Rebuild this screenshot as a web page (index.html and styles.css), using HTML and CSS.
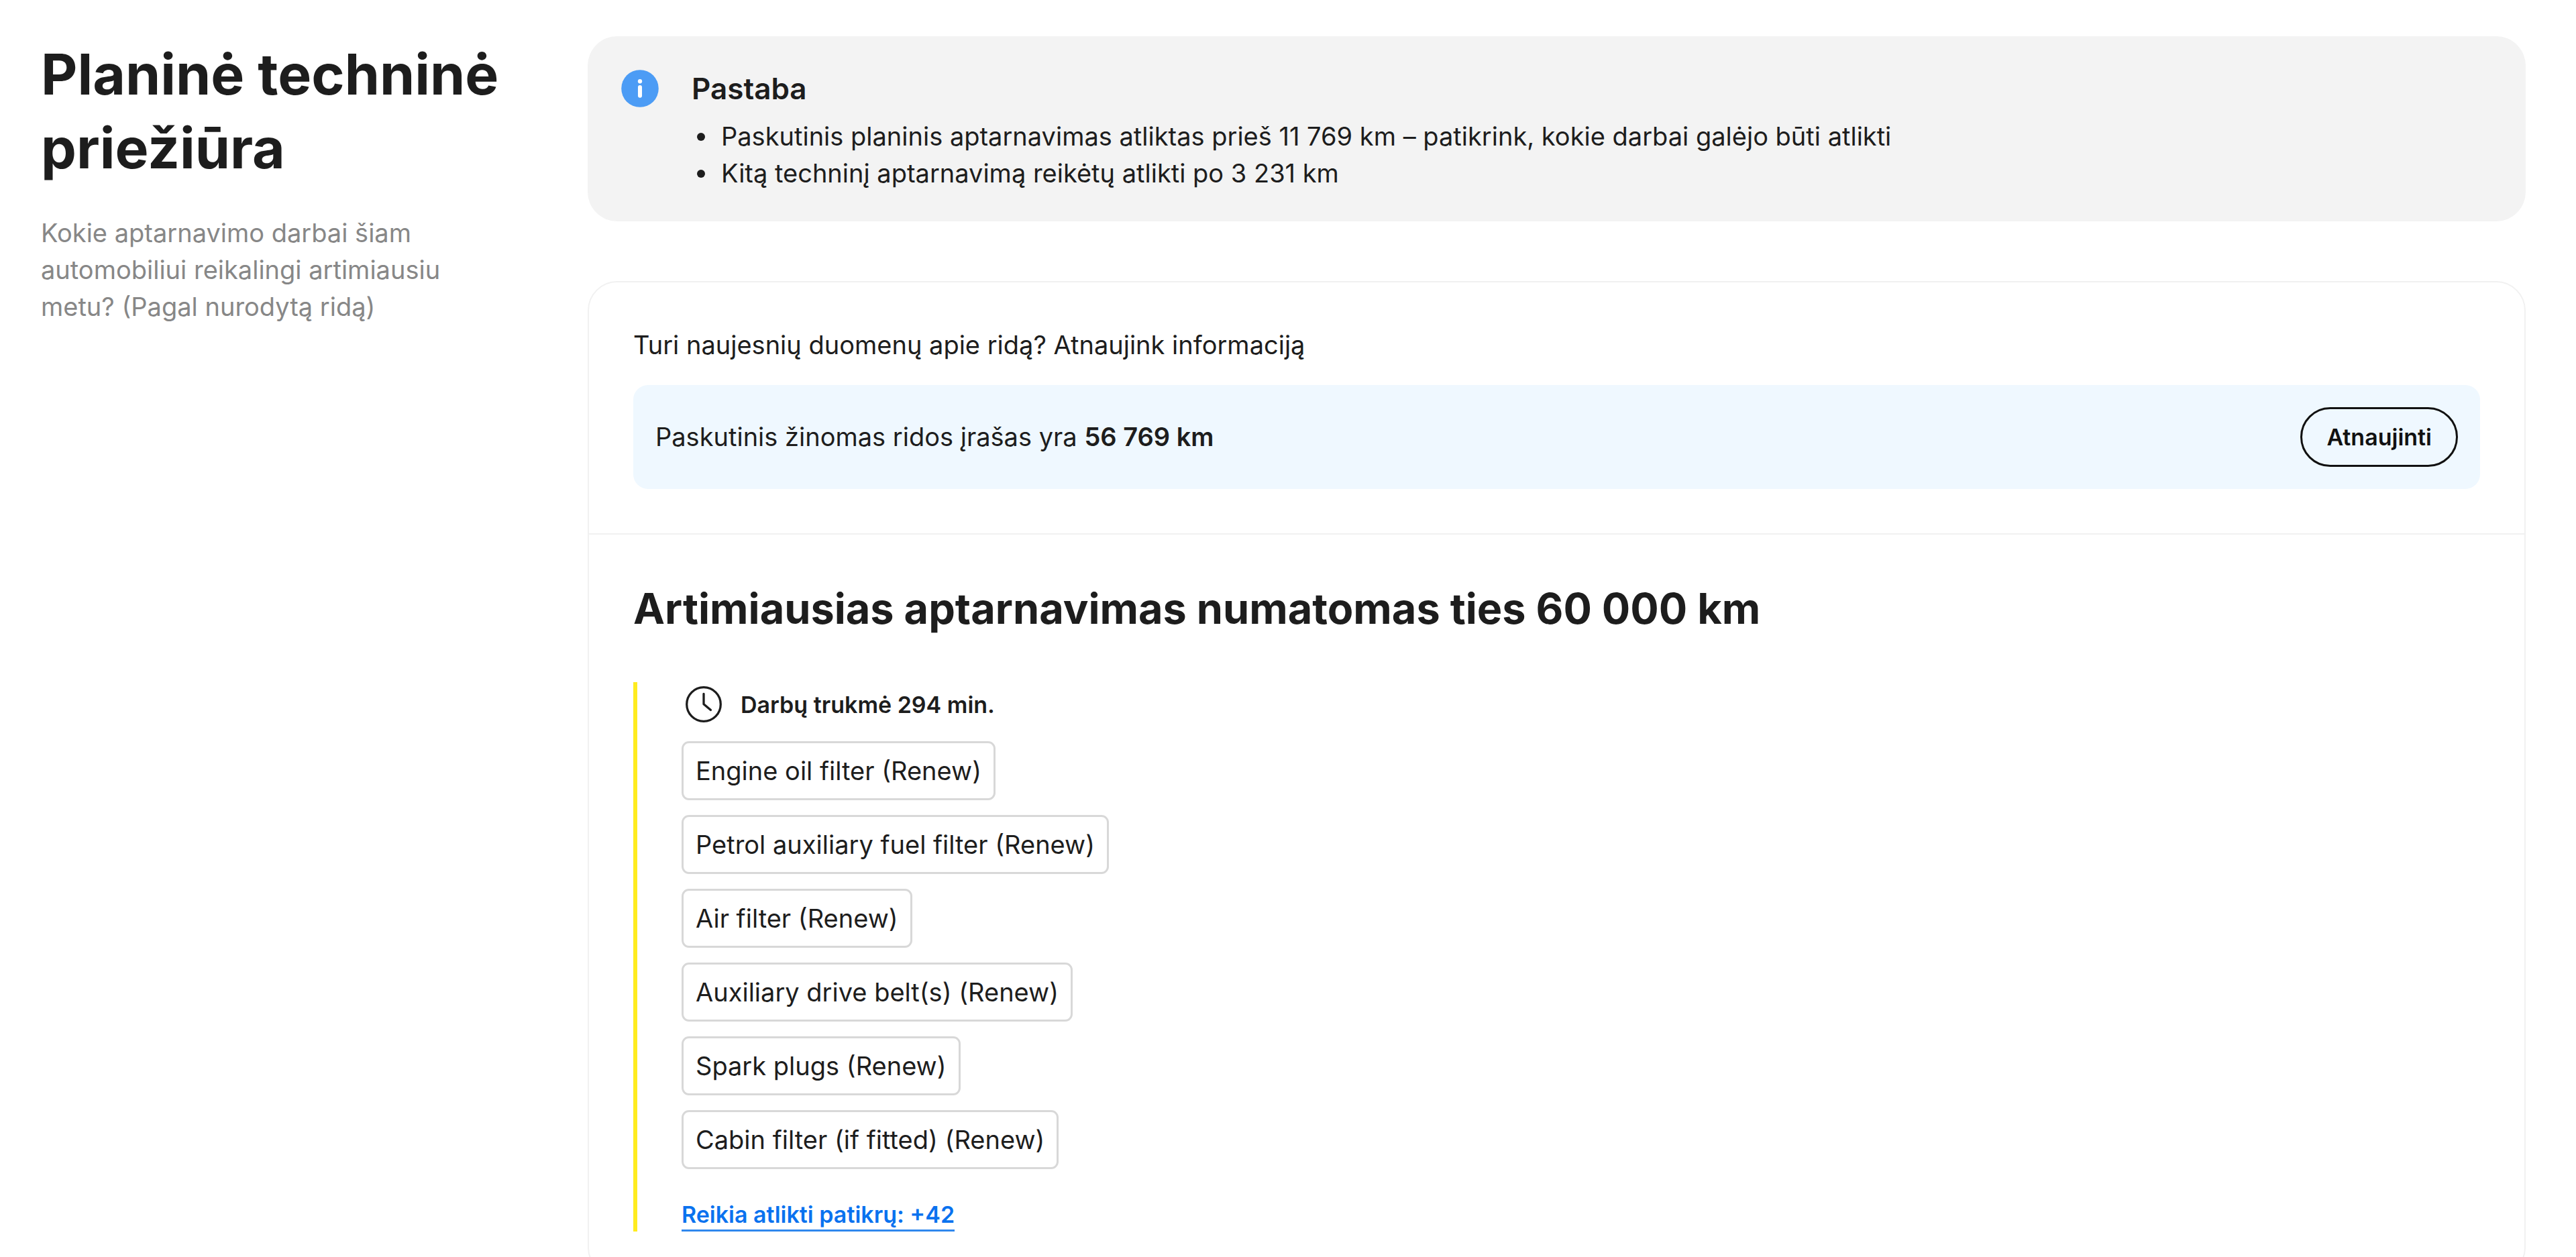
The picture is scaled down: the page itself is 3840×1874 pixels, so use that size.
FILE: index.html
```html
<!DOCTYPE html>
<html lang="lt">
<head>
    <meta charset="UTF-8">
    <meta name="viewport" content="width=device-width, initial-scale=1.0">
    <title>Planinė techninė priežiūra</title>
    <link rel="stylesheet" href="styles.css">
</head>
<body>

    <div class="container">
        <!-- Section title -->
        <header class="intro">
            <h1>Planinė techninė priežiūra</h1>
            <p>Kokie aptarnavimo darbai šiam automobiliui reikalingi artimiausiu metu? (Pagal nurodytą ridą)</p>
        </header>

        <main class="content">
            <!-- Note -->
            <section class="note">
                <svg class="icon" viewBox="0 0 24 24" aria-hidden="true">
                    <circle cx="12" cy="12" r="10.1" fill="#4c9cf5"/>
                    <circle cx="12" cy="8.1" r="1.15" fill="#fff"/>
                    <path d="M12 11.3v4.6" stroke="#fff" stroke-width="2.2" stroke-linecap="round"/>
                </svg>
                <div class="note-text">
                    <h2>Pastaba</h2>
                    <ul>
                        <li>Paskutinis planinis aptarnavimas atliktas prieš 11 769 km – patikrink, kokie darbai galėjo būti atlikti</li>
                        <li>Kitą techninį aptarnavimą reikėtų atlikti po 3 231 km</li>
                    </ul>
                </div>
            </section>

            <div class="card">
                <!-- Mileage update -->
                <section class="mileage">
                    <p>Turi naujesnių duomenų apie ridą? Atnaujink informaciją</p>
                    <div class="mileage-bar">
                        <span>Paskutinis žinomas ridos įrašas yra <strong>56 769 km</strong></span>
                        <button type="button">Atnaujinti</button>
                    </div>
                </section>

                <!-- Next service -->
                <section class="service">
                    <h2>Artimiausias aptarnavimas numatomas ties 60 000 km</h2>
                    <div class="works">
                        <div class="duration">
                            <svg class="icon" viewBox="0 0 24 24" fill="none" stroke="#1d1d1d" stroke-width="1.2" stroke-linecap="round" stroke-linejoin="round" aria-hidden="true">
                                <circle cx="12" cy="12" r="9.2"/>
                                <path d="M12 6.3v5.6l3.8 3.2"/>
                            </svg>
                            <span>Darbų trukmė 294 min.</span>
                        </div>
                        <ul class="work-list">
                            <li>Engine oil filter (Renew)</li>
                            <li>Petrol auxiliary fuel filter (Renew)</li>
                            <li>Air filter (Renew)</li>
                            <li>Auxiliary drive belt(s) (Renew)</li>
                            <li>Spark plugs (Renew)</li>
                            <li>Cabin filter (if fitted) (Renew)</li>
                        </ul>
                        <a href="#">Reikia atlikti patikrų: +42</a>
                    </div>
                </section>
            </div>
        </main>
    </div>

</body>
</html>
```
FILE: styles.css
```css
* {
    box-sizing: border-box;
    margin: 0;
    padding: 0;
}

body {
    font-family: Inter, "Liberation Sans", Arial, sans-serif;
    font-size: 38px;
    line-height: 55px;
    color: #1d1d1d;
    background-color: #ffffff;
}

.container {
    display: grid;
    grid-template-columns: 693px 1fr;
    column-gap: 122px;
    padding: 54px 75px 0 61px;
}

.intro {
    padding-top: 2px;
}

.intro h1 {
    font-size: 84px;
    line-height: 110px;
    font-weight: 700;
}

.intro p {
    margin-top: 44px;
    color: #878787;
}

.icon {
    width: 66px;
    height: 66px;
    flex-shrink: 0;
}

.note {
    display: flex;
    gap: 44px;
    padding: 45px 45px 44px;
    border-radius: 44px;
    background-color: #f3f3f3;
}

.note h2 {
    margin-bottom: 11px;
    font-size: 44px;
    line-height: 66px;
    font-weight: 600;
}

.note ul {
    padding-left: 8px;
    list-style: none;
}

.note li {
    display: flex;
    align-items: center;
    gap: 24px;
}

.note li::before {
    content: "";
    flex-shrink: 0;
    width: 12px;
    height: 12px;
    border-radius: 50%;
    background-color: #1d1d1d;
}

.card {
    margin-top: 89px;
    border: 2px solid #f1f1f1;
    border-radius: 44px;
}

.mileage {
    padding: 66px;
    border-bottom: 2px solid #f1f1f1;
}

.mileage-bar {
    display: flex;
    justify-content: space-between;
    align-items: center;
    margin-top: 32px;
    padding: 33px;
    border-radius: 22px;
    background-color: #eff8ff;
}

strong {
    font-weight: 600;
}

button {
    height: 89px;
    padding: 0 36px;
    border: 3px solid #111111;
    border-radius: 45px;
    background: none;
    color: #111111;
    font-family: inherit;
    font-size: 34px;
    font-weight: 600;
    cursor: pointer;
}

.service {
    padding: 66px;
}

.service h2 {
    font-size: 63px;
    line-height: 88px;
    font-weight: 700;
}

.works {
    display: flex;
    flex-direction: column;
    align-items: flex-start;
    margin-top: 66px;
    padding-left: 66px;
    border-left: 6px solid #ffec1f;
}

.duration {
    display: flex;
    align-items: center;
    gap: 22px;
    font-size: 34px;
    font-weight: 600;
}

.work-list {
    list-style: none;
}

.work-list li {
    width: fit-content;
    margin-top: 22px;
    padding: 14px 18px 13px;
    border: 3px solid #d8d8d8;
    border-radius: 11px;
}

.works a {
    margin-top: 46px;
    border-bottom: 3px solid #2f88ee;
    color: #0a72ef;
    font-size: 34px;
    line-height: 44px;
    font-weight: 600;
    text-decoration: none;
}
```
